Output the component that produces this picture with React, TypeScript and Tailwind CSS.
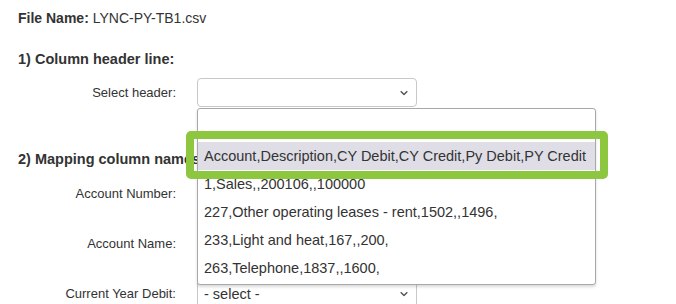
import React from "react";

const Chevron = () => (
  <svg width="8" height="5" viewBox="0 0 8 5" className="absolute right-[8px] top-1/2 -translate-y-1/2">
    <path d="M0.7 0.7 L4 4 L7.3 0.7" fill="none" stroke="#555" strokeWidth="1.4" />
  </svg>
);

function Select({ value }: { value?: string }) {
  return (
    <div className="relative ml-[21px] flex h-[29px] w-[220px] items-center rounded-[4px] border border-[#c8c8c8] bg-white pl-[6px] text-[14.5px] text-[#333]">
      {value}
      <Chevron />
    </div>
  );
}

function Row({ label, value, mt }: { label: string; value?: string; mt: string }) {
  return (
    <div className={`flex items-center ${mt}`}>
      <div className="w-[158px] text-right">{label}</div>
      <Select value={value} />
    </div>
  );
}

const options = [
  "1,Sales,,200106,,100000",
  "227,Other operating leases - rent,1502,,1496,",
  "233,Light and heat,167,,200,",
  "263,Telephone,1837,,1600,",
];

export default function App() {
  return (
    <div className="relative h-[304px] w-[676px] overflow-hidden bg-white font-['Liberation_Sans',Arial,sans-serif] text-[13px] leading-[18px] text-[#333]">
      <div className="pl-[18px] pt-[9px]">
        <p className="text-[14px]">
          <span className="font-bold">File Name:</span> LYNC-PY-TB1.csv
        </p>
        <h3 className="mt-[23px] text-[14.5px] font-bold">1) Column header line:</h3>
        <Row label="Select header:" mt="mt-[10px]" />
        <h3 className="mt-[43px] text-[14.5px] font-bold">2) Mapping column names:</h3>
        <Row label="Account Number:" mt="mt-[11px]" />
        <Row label="Account Name:" mt="mt-[21px]" />
        <Row label="Current Year Debit:" mt="mt-[21px]" value="- select -" />
      </div>

      {/* open dropdown list */}
      <div className="absolute left-[197px] top-[108px] h-[177px] w-[399px] rounded-[3px] border border-[#a8a8a8] bg-white pt-[33px] text-[14.5px] leading-[28px] text-[#333] shadow-[0_2px_3px_rgba(0,0,0,0.15)]">
        <div className="h-[28px] bg-[#dfdee6] pl-[6px] whitespace-nowrap">
          Account,Description,CY Debit,CY Credit,Py Debit,PY Credit
        </div>
        {options.map((o) => (
          <div key={o} className="h-[28px] pl-[6px] whitespace-nowrap">
            {o}
          </div>
        ))}
      </div>

      {/* green highlight annotation */}
      <div className="absolute left-[186px] top-[131px] h-[48px] w-[422px] rounded-[5px] border-[8px] border-[#8dc63f]" />
    </div>
  );
}
